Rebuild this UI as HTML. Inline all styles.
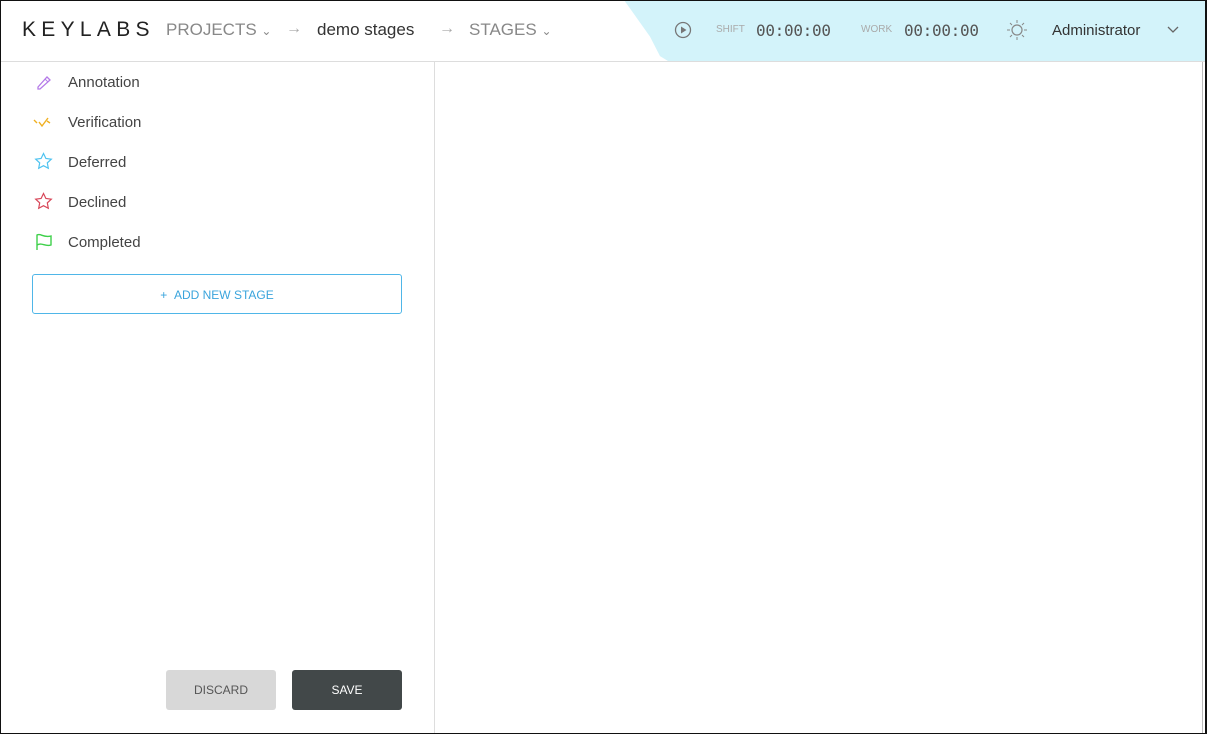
<!DOCTYPE html>
<html><head><style>
*{box-sizing:border-box;margin:0;padding:0}
body{width:1207px;height:734px;overflow:hidden;background:#fff;font-family:"Liberation Sans",sans-serif;position:relative}
.frame{position:absolute;inset:0;border:1px solid #111;border-right:2px solid #111;pointer-events:none;z-index:9}
.hdr{position:absolute;left:0;top:0;width:1207px;height:62px;border-bottom:1px solid #ddd}
.blue{position:absolute;left:624px;top:0;width:583px;height:61px;background:#d3f3fa;clip-path:polygon(0 0,100% 0,100% 100%,44px 100%,36px 92%,26px 60%)}
.t{position:absolute;white-space:nowrap}
.side{position:absolute;left:434px;top:62px;width:1px;height:672px;background:#ddd}
.item{position:absolute;left:68px;font-size:15px;color:#444}
.btn{position:absolute;border-radius:3px;font-size:12px;text-align:center;line-height:40px}
.mono{font-family:"DejaVu Sans Mono",monospace;font-size:16px;color:#555;letter-spacing:-0.3px}
</style></head><body>
<div class="hdr"><div class="blue"></div></div>
<div class="t" style="left:22px;top:18px;font-size:21px;letter-spacing:5.3px;color:#222">KEYLABS</div>
<div class="t" style="left:166px;top:20px;font-size:17px;color:#888">PROJECTS <span style="font-size:12px">&#8964;</span></div>
<div class="t" style="left:286px;top:20px;font-size:16px;color:#aaa">→</div>
<div class="t" style="left:317px;top:20px;font-size:17px;color:#333">demo stages</div>
<div class="t" style="left:439px;top:20px;font-size:16px;color:#aaa">→</div>
<div class="t" style="left:469px;top:20px;font-size:17px;color:#888">STAGES <span style="font-size:12px">&#8964;</span></div>
<svg class="t" style="left:674px;top:21px" width="18" height="18"><circle cx="9" cy="9" r="7.5" fill="none" stroke="#777" stroke-width="1.3"/><path d="M7 5.5v7l5.5-3.5z" fill="#777"/></svg>
<div class="t" style="left:716px;top:24px;font-size:10px;color:#aaa">SHIFT</div>
<div class="t mono" style="left:756px;top:21px">00:00:00</div>
<div class="t" style="left:861px;top:24px;font-size:10px;color:#aaa">WORK</div>
<div class="t mono" style="left:904px;top:21px">00:00:00</div>
<svg class="t" style="left:1006px;top:19px" width="22" height="22"><circle cx="11" cy="11" r="5" fill="none" stroke="#888" stroke-width="1.2"/><path d="M11 1v3M11 18v3M1 11h3M18 11h3M4 4l2 2M16 16l2 2M4 18l2-2M16 6l2-2" stroke="#888" stroke-width="1"/></svg>
<div class="t" style="left:1052px;top:22px;font-size:15px;color:#333">Administrator</div>
<svg class="t" style="left:1167px;top:26px" width="12" height="8"><path d="M1 1l5 5 5-5" fill="none" stroke="#666" stroke-width="1.3"/></svg>
<div class="side"></div>
<svg class="t" style="left:35px;top:73px" width="18" height="18"><path d="M3 14l9-10 3 3-10 9H3z" fill="none" stroke="#b57be8" stroke-width="1.3"/><path d="M10 6l3 3" stroke="#b57be8"/></svg>
<div class="item" style="top:74px">Annotation</div>
<svg class="t" style="left:33px;top:115px" width="20" height="14"><path d="M1 5l3 3M6 7l3 4 6-8M14 6l3 2" fill="none" stroke="#f0b020" stroke-width="1.4"/></svg>
<div class="item" style="top:114px">Verification</div>
<svg class="t" style="left:34px;top:152px" width="19" height="19"><path d="M9.5 1.5l2.4 5 5.4.7-4 3.7 1 5.4-4.8-2.6-4.8 2.6 1-5.4-4-3.7 5.4-.7z" fill="none" stroke="#4fc3f0" stroke-width="1.2"/></svg>
<div class="item" style="top:154px">Deferred</div>
<svg class="t" style="left:34px;top:192px" width="19" height="19"><path d="M9.5 1.5l2.4 5 5.4.7-4 3.7 1 5.4-4.8-2.6-4.8 2.6 1-5.4-4-3.7 5.4-.7z" fill="none" stroke="#d8485a" stroke-width="1.2"/></svg>
<div class="item" style="top:194px">Declined</div>
<svg class="t" style="left:35px;top:233px" width="18" height="18"><path d="M2 17V2c4-2 6 3 14 1v9c-6 2-9-3-14 0" fill="none" stroke="#3ed04a" stroke-width="1.4"/></svg>
<div class="item" style="top:234px">Completed</div>
<div class="btn" style="left:32px;top:274px;width:370px;height:40px;border:1px solid #4fb6e8;color:#3aa4dc;line-height:40px">+ &nbsp;ADD NEW STAGE</div>
<div class="btn" style="left:166px;top:670px;width:110px;height:40px;background:#d8d8d8;color:#555">DISCARD</div>
<div class="btn" style="left:292px;top:670px;width:110px;height:40px;background:#424849;color:#fff">SAVE</div>
<div class="t" style="left:1202px;top:62px;width:1px;height:672px;background:#bbb"></div>
<div class="frame"></div>
</body></html>
